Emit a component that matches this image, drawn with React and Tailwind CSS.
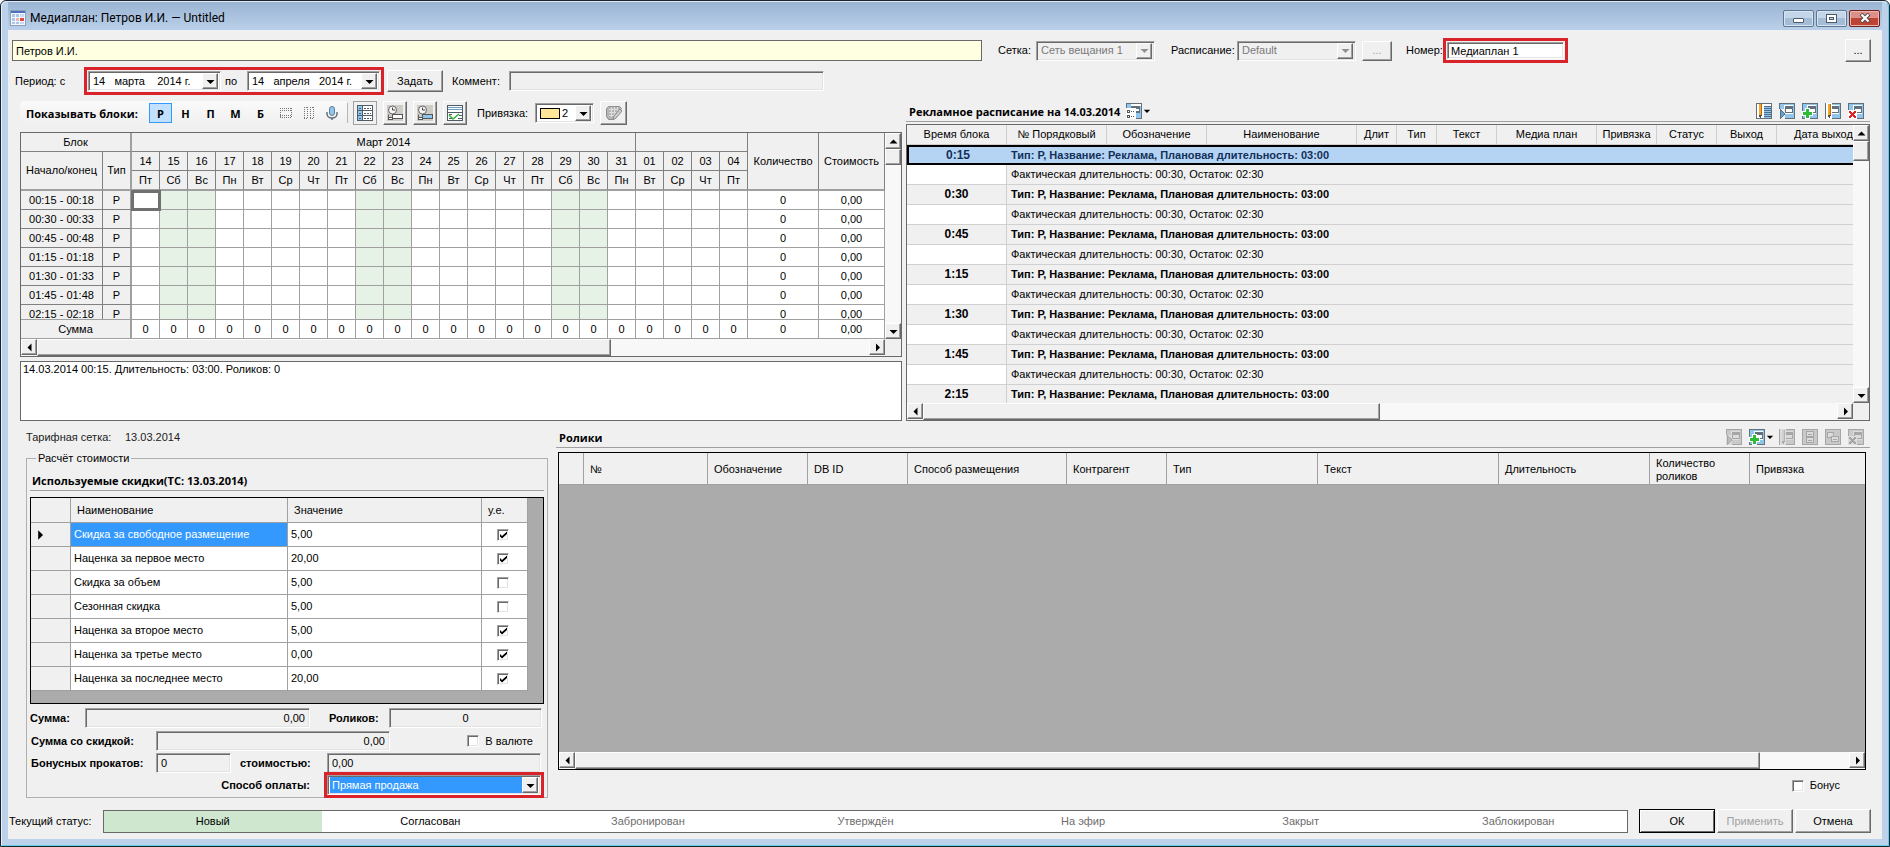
import { useState } from 'react';

const RAISED =
  'border border-t-white border-l-white border-r-[#696969] border-b-[#696969] bg-[#f0f0f0] shadow-[inset_-1px_-1px_0_#a0a0a0]';
const SUNKEN =
  'border border-t-[#a0a0a0] border-l-[#a0a0a0] border-r-white border-b-white shadow-[inset_1px_1px_0_#696969,inset_-1px_-1px_0_#e3e3e3]';

const DAYS = [
  ['14', 'Пт'], ['15', 'Сб'], ['16', 'Вс'], ['17', 'Пн'], ['18', 'Вт'], ['19', 'Ср'], ['20', 'Чт'], ['21', 'Пт'],
  ['22', 'Сб'], ['23', 'Вс'], ['24', 'Пн'], ['25', 'Вт'], ['26', 'Ср'], ['27', 'Чт'], ['28', 'Пт'], ['29', 'Сб'],
  ['30', 'Вс'], ['31', 'Пн'], ['01', 'Вт'], ['02', 'Ср'], ['03', 'Чт'], ['04', 'Пт'],
];

const BLOCKS = [
  '00:15 - 00:18', '00:30 - 00:33', '00:45 - 00:48', '01:15 - 01:18', '01:30 - 01:33', '01:45 - 01:48', '02:15 - 02:18',
];

const AD_COLUMNS = [
  ['Время блока', 'w-[100px]'], ['№ Порядковый', 'w-[100px]'], ['Обозначение', 'w-[100px]'],
  ['Наименование', 'w-[150px]'], ['Длит', 'w-10'], ['Тип', 'w-10'], ['Текст', 'w-15'], ['Медиа план', 'w-[100px]'],
  ['Привязка', 'w-15'], ['Статус', 'w-15'], ['Выход', 'w-15'], ['Дата выхода', 'w-[100px]'],
];

const AD_TIMES = ['0:15', '0:30', '0:45', '1:15', '1:30', '1:45', '2:15'];

const DISCOUNTS = [
  ['Скидка за свободное размещение', '5,00', true],
  ['Наценка за первое место', '20,00', true],
  ['Скидка за объем', '5,00', false],
  ['Сезонная скидка', '5,00', false],
  ['Наценка за второе место', '5,00', true],
  ['Наценка за третье место', '0,00', true],
  ['Наценка за последнее место', '20,00', true],
];

const ROLL_COLUMNS = [
  ['№', 'w-[124px]'], ['Обозначение', 'w-[100px]'], ['DB ID', 'w-[100px]'], ['Способ размещения', 'w-[159px]'],
  ['Контрагент', 'w-[100px]'], ['Тип', 'w-[151px]'], ['Текст', 'w-[181px]'], ['Длительность', 'w-[151px]'],
  ['Количество роликов', 'w-[100px]'], ['Привязка', ''],
];

const STATUSES = ['Новый', 'Согласован', 'Забронирован', 'Утверждён', 'На эфир', 'Закрыт', 'Заблокирован'];

/* ---------- Иконки ---------- */

const Svg = ({ children, className = 'size-4' }) => (
  <svg viewBox="0 0 16 16" className={className} shapeRendering="crispEdges" aria-hidden="true">
    {children}
  </svg>
);

const AppIcon = () => (
  <Svg>
    <rect width="16" height="16" fill="#8aa0b8" />
    <rect x="1" y="1" width="14" height="2" fill="#4f6fc0" />
    <rect x="1" y="3" width="14" height="12" fill="#f4f8fd" />
    <path d="M2 4h3v3H2zM6 4h3v3H6zM2 8h3v3H2zM2 12h3v2H2zM6 12h3v2H6z" fill="#a9c6ee" />
    <path d="M6 8h3v3H6z" fill="#e9b6b6" />
    <path d="M10 8h4v3h-4z" fill="#e0493f" />
    <path d="M10 4h4v3h-4zM10 12h4v2h-4z" fill="#c9dbf3" />
  </Svg>
);

// Карточка с мини-окном, основа всех кнопок «добавить / изменить / удалить»
const CardIcon = ({ kind, off, className }) => {
  const line = off ? '#a6a6a6' : '#62707c';
  const blue = off ? '#c9c9c9' : '#8fc6ee';
  const paper = off ? '#dcdcdc' : '#fff';
  if (kind === 'pair' || kind === 'copy') {
    return (
      <Svg className={className}>
        <rect x=".5" y=".5" width="15" height="15" fill={blue} stroke={line} />
        {kind === 'pair' ? (
          <g fill={paper} stroke={line}>
            <rect x="4.500" y="2.500" width="7" height="5" />
            <rect x="4.500" y="8.500" width="7" height="5" />
            <path d="M6 5.500h4M6 11.500h4" />
          </g>
        ) : (
          <g fill={paper} stroke={line}>
            <rect x="2.500" y="3.500" width="6" height="5" />
            <rect x="6.500" y="7.500" width="7" height="5" />
            <path d="M8 10.500h4" />
          </g>
        )}
      </Svg>
    );
  }
  return (
    <Svg className={className}>
      <rect x=".5" y=".5" width="15" height="15" fill={blue} stroke={line} />
      <rect x="5" y="2" width="9" height="9" fill={paper} />
      <rect x="6" y="3" width="8" height="7" fill={line} />
      <rect x="7" y="6" width="6" height="3" fill={paper} />
      {kind === 'insert' && (
        <>
          <rect x="0" y="6" width="6" height="10" fill={off ? '#dcdcdc' : '#f0f0f0'} />
          <path d="M1 6l5 5-5 5z" fill={off ? '#bdbdbd' : '#5aa3d8'} stroke={line} />
        </>
      )}
      {kind === 'add' && (
        <>
          <path d="M3 5h5v3h3v5H8v3H3v-3H0V8h3z" fill="#fff" />
          <path d="M4 6h3v3h3v3H7v3H4v-3H1V9h3z" fill="#2fbb35" />
        </>
      )}
      {kind === 'edit' && (
        <>
          <rect x="1" y="0" width="6" height="16" fill={paper} />
          <rect x="3" y="1" width="3" height="11" fill={off ? '#cfcfcf' : '#f3a62a'} />
          <rect x="5" y="1" width="1" height="11" fill={off ? '#b4b4b4' : '#b86d12'} />
          <path d="M3 12h3l-1 3H4z" fill={off ? '#a6a6a6' : '#4b4b4b'} />
        </>
      )}
      {kind === 'delete' && (
        <>
          <rect x="0" y="7" width="9" height="9" fill={paper} />
          <path
            d="M1 8h2v1h1v1h1V9h1V8h2v2H7v1H6v1h1v1h1v2H6v-1H5v-1H4v1H3v1H1v-2h1v-1h1v-1H2v-1H1z"
            fill={off ? '#a6a6a6' : '#dd2222'}
          />
        </>
      )}
    </Svg>
  );
};

const EditListIcon = () => (
  <Svg>
    <rect x=".5" y=".5" width="15" height="15" fill="#fff" stroke="#62707c" />
    <path d="M8 4h7v11H8z" fill="#8fc6ee" />
    <path d="M8 3.500h7M8 5.500h7M8 7.500h7M8 9.500h7M8 11.500h7M8 13.500h7" stroke="#4d6b84" />
    <rect x="3" y="1" width="3" height="11" fill="#f3a62a" />
    <rect x="5" y="1" width="1" height="11" fill="#b86d12" />
    <path d="M3 12h3l-1 3H4z" fill="#4b4b4b" />
  </Svg>
);

const ViewIcon = () => (
  <Svg>
    <rect width="16" height="16" fill="#62707c" />
    <rect x="1" y="1" width="14" height="14" fill="#8fc6ee" />
    <path d="M5 1h10v2H5z" fill="#fff" />
    <path d="M0 5h10v11H0z" fill="#fff" />
    <path d="M5 3h9v7h-4V5H5z" fill="#62707c" />
    <path d="M10 6h3v2h-3z" fill="#fff" />
    <path d="M1.500 7.500h2v2h-2zM1.500 12.500h2v2h-2z" fill="#fff" stroke="#555" />
    <path d="M5 8h1v1H5zM7 8h1v1H7zM5 13h1v1H5zM7 13h1v1H7z" fill="#555" />
  </Svg>
);

const RowsIcon = () => (
  <Svg>
    <path d="M2 3.500h12M2 5.500h12M2 10.500h12M2 12.500h12M2.500 3v10M13.500 3v10" stroke="#777" strokeDasharray="1 1" fill="none" />
  </Svg>
);

const ColumnsIcon = () => (
  <Svg>
    <path d="M3.500 2v12M6.500 2v12M9.500 2v12M12.500 2v12M3 2.500h4M3 13.500h4M9 2.500h4M9 13.500h4" stroke="#777" strokeDasharray="1 1" fill="none" />
  </Svg>
);

const MicIcon = () => (
  <svg viewBox="0 0 16 16" className="size-4" aria-hidden="true">
    <rect x="5.500" y="1.500" width="5" height="9" rx="2.500" fill="#8fc6ee" stroke="#5f7f9c" />
    <path d="M3 7v2a5 4 0 0 0 10 0V7M8 13v2" fill="none" stroke="#62707c" strokeWidth="1.500" />
  </svg>
);

const ListIcon = () => (
  <Svg>
    <rect x=".5" y=".5" width="15" height="15" fill="#fff" stroke="#4f5b66" />
    <rect x="1" y="1" width="4" height="14" fill="#8fc6ee" />
    <path d="M1 5.500h14M1 10.500h14M5.500 1v14" stroke="#4f5b66" />
    <path d="M2 3.500h2M2 8.500h2M2 13.500h2M7 3.500h7M7 8.500h7M7 13.500h7" stroke="#4f5b66" strokeDasharray="2 1" />
  </Svg>
);

const ClockIcon = ({ fill }) => (
  <svg viewBox="0 0 16 16" className="size-4" aria-hidden="true">
    <rect width="16" height="16" fill="#cfccc6" />
    <circle cx="5.500" cy="5" r="4" fill="#f4f4f4" stroke="#666" />
    <path d="M5.500 2.500V5h2.500" fill="none" stroke="#444" />
    <path d="M1.500 9.500v4" fill="none" stroke="#666" />
    <rect x="5.500" y="9.500" width="10" height="4" fill={fill} stroke="#555" />
    <rect x="1.500" y="12.500" width="4" height="2" fill="#fff" stroke="#555" />
  </svg>
);

const CheckListIcon = () => (
  <svg viewBox="0 0 16 16" className="size-4" aria-hidden="true">
    <rect x=".5" y=".5" width="15" height="15" fill="#fff" stroke="#4f5b66" />
    <path d="M1 2.500h14M1 4.500h14" stroke="#6f9cc4" />
    <path d="M1 7.500h14M2 9.500h3M2 13.500h3M12 10.500h3M11 13.500h4" stroke="#4f5b66" />
    <path d="M2 10l4 4 6-5" fill="none" stroke="#35b53a" strokeWidth="1.600" />
  </svg>
);

const PencilGridIcon = () => (
  <svg viewBox="0 0 16 16" className="size-4" aria-hidden="true">
    <path d="M2.500 1.500h11l2 2-8 11h-5l-2-3v-8z" fill="#b4b4b4" stroke="#8f8f8f" />
    <path d="M3 4.500h9M3 7.500h7M3 10.500h5M5.500 2v10M8.500 2v8M11.500 2v4" stroke="#dedede" />
    <path d="M14 4l-6 7-1 4 3-2 6-7z" fill="#cfcfcf" stroke="#8a8a8a" />
  </svg>
);

const ARROWS = {
  up: 'M3.500 9.500h8l-4-4z',
  down: 'M3.500 6h8l-4 4z',
  left: 'M9.500 3.500v8l-4-4z',
  right: 'M6 3.500v8l4-4z',
};

const Arrow = ({ dir, color = '#000', className = 'size-[15px] shrink-0' }) => (
  <svg viewBox="0 0 15 15" className={className} aria-hidden="true">
    <path d={ARROWS[dir]} fill={color} />
  </svg>
);

/* ---------- Элементы управления ---------- */

const ScrollButton = ({ dir, label }) => (
  <button aria-label={label} className={`flex size-4 shrink-0 items-center justify-center ${RAISED}`}>
    <Arrow dir={dir} />
  </button>
);

const HScroll = ({ thumb }) => (
  <div className="flex h-[17px] w-full bg-[#f8f8f8]">
    <ScrollButton dir="left" label="Влево" />
    <div className="flex flex-1">
      <div className={`h-full ${thumb} ${RAISED}`} />
    </div>
    <ScrollButton dir="right" label="Вправо" />
  </div>
);

const VScroll = ({ thumb }) => (
  <div className="flex w-4 shrink-0 flex-col bg-[#f8f8f8]">
    <ScrollButton dir="up" label="Вверх" />
    <div className="flex-1">
      <div className={`w-full ${thumb} ${RAISED}`} />
    </div>
    <ScrollButton dir="down" label="Вниз" />
  </div>
);

const Button = ({ children, className = '', ...props }) => (
  <button className={`flex shrink-0 items-center justify-center disabled:text-[#a0a0a0] ${RAISED} ${className}`} {...props}>
    {children}
  </button>
);

const TextBox = ({ className = '', ...props }) => (
  <input type="text" className={`h-5 min-w-0 px-1 outline-none ${SUNKEN} ${className}`} {...props} />
);

const Combo = ({ id, value, disabled, className = '', selectClass = '', swatch }) => (
  <div className={`flex h-5 items-center p-0.5 ${SUNKEN} ${disabled ? 'text-[#7a7a7a]' : 'bg-white'} ${className}`}>
    {swatch && <span className="ml-0.5 h-[11px] w-5 shrink-0 border border-black bg-[#ffe699]" />}
    <select id={id} disabled={disabled} className={`h-4 min-w-0 flex-1 appearance-none pl-0.5 outline-none ${selectClass}`}>
      <option>{value}</option>
    </select>
    <span className={`flex size-4 shrink-0 items-center justify-center ${RAISED}`}>
      <Arrow dir="down" color={disabled ? '#909090' : '#000'} />
    </span>
  </div>
);

const DateBox = ({ label, value }) => (
  <div className={`flex h-5 w-[133px] items-center bg-white p-0.5 ${SUNKEN}`}>
    <input type="text" aria-label={label} defaultValue={value} className="h-4 min-w-0 flex-1 pl-0.5 whitespace-pre outline-none" />
    <button aria-label="Открыть календарь" className={`flex size-4 shrink-0 items-center justify-center ${RAISED}`}>
      <Arrow dir="down" />
    </button>
  </div>
);

const Checkbox = ({ className = '', ...props }) => (
  <span className={`inline-grid ${className}`}>
    <input type="checkbox" className={`peer col-start-1 row-start-1 size-3 appearance-none bg-white ${SUNKEN}`} {...props} />
    <svg viewBox="0 0 12 12" className="pointer-events-none col-start-1 row-start-1 hidden size-3 peer-checked:block" aria-hidden="true">
      <path d="M3 5v2.500L5 9.500l5-4.500V2.500L5 7z" fill="#000" />
    </svg>
  </span>
);

/* ---------- Части окна ---------- */

const TitleBar = () => (
  <header className="flex h-7 items-center bg-linear-to-b from-[#9ab4d2] to-[#bad0ea] px-0.5 pt-1">
    <AppIcon />
    <h1 className="ml-1 font-[Roboto,'Noto_Sans',sans-serif] text-[12px]">Медиаплан: Петров И.И. — Untitled</h1>
    <div className="ml-auto flex gap-0.5">
      <button aria-label="Свернуть" className="flex h-[17px] w-[31px] items-center justify-center rounded-[2px] border border-[#5d7692] bg-linear-to-b from-[#c3d5e8] from-50% to-[#a4bcd6] to-50% shadow-[inset_0_0_0_1px_#d9e6f2]">
        <span className="mt-1 h-[5px] w-[11px] rounded-[1px] border border-[#4c5b6c] bg-white" />
      </button>
      <button aria-label="Развернуть" className="flex h-[17px] w-[31px] items-center justify-center rounded-[2px] border border-[#5d7692] bg-linear-to-b from-[#c3d5e8] from-50% to-[#a4bcd6] to-50% shadow-[inset_0_0_0_1px_#d9e6f2]">
        <svg viewBox="0 0 11 9" className="h-[9px] w-[11px]" shapeRendering="crispEdges" aria-hidden="true">
          <rect width="11" height="9" fill="#4c5b6c" />
          <rect x="1" y="1" width="9" height="7" fill="#fff" />
          <rect x="3" y="3" width="5" height="3" fill="#4c5b6c" />
          <rect x="4" y="4" width="3" height="1" fill="#c3d5e8" />
        </svg>
      </button>
      <button aria-label="Закрыть" className="flex h-[17px] w-[31px] items-center justify-center rounded-[2px] border border-[#6e211d] bg-linear-to-b from-[#dc9087] from-50% to-[#bd4334] to-50% shadow-[inset_0_0_0_1px_#e9b5ae]">
        <svg viewBox="0 0 12 10" className="h-2.5 w-3" aria-hidden="true">
          <path d="M2 1l8 8M10 1L2 9" stroke="#53494d" strokeWidth="4" />
          <path d="M2.500 1.500l7 7M9.500 1.500l-7 7" stroke="#fff" strokeWidth="2.200" />
        </svg>
      </button>
    </div>
  </header>
);

const TopFields = () => (
  <>
    <div className="flex h-[25px] items-center pr-[11px] pl-1">
      <input aria-label="Клиент" type="text" defaultValue="Петров И.И." className="h-[21px] min-w-0 flex-1 border border-[#696969] bg-[#ffffe1] px-[3px] outline-none" />
      <label htmlFor="net" className="ml-4 w-[38px]">Сетка:</label>
      <Combo id="net" value="Сеть вещания 1" disabled className="w-[119px]" />
      <label htmlFor="sched" className="ml-4 w-[66px]">Расписание:</label>
      <Combo id="sched" value="Default" disabled className="w-[119px]" />
      <Button disabled aria-label="Выбрать расписание" className="ml-1.5 h-5 w-[30px]">...</Button>
      <label htmlFor="num" className="ml-3.5 w-[37px]">Номер:</label>
      <div className="w-[125px] border-[3px] border-[#d8232a] p-px">
        <TextBox id="num" defaultValue="Медиаплан 1" className="h-[17px] w-full bg-white px-[3px]" />
      </div>
      <Button aria-label="Свойства" className="ml-[277px] h-[23px] w-[26px]">...</Button>
    </div>
    <div className="mt-[5px] flex h-[26px] items-center pl-[7px]">
      <span className="w-[69px]">Период: с</span>
      <div className="flex items-center border-[3px] border-[#d8232a] p-px">
        <DateBox label="Дата начала" value="14   марта    2014 г." />
        <span className="w-[26px] pl-1">по</span>
        <DateBox label="Дата окончания" value="14   апреля   2014 г." />
      </div>
      <Button className="ml-[3px] h-[22px] w-[56px]">Задать</Button>
      <label htmlFor="comment" className="ml-[9px] w-[57px]">Коммент:</label>
      <TextBox id="comment" className="w-[315px]" />
    </div>
  </>
);

const HEADING = "font-['Open_Sans','Noto_Sans',sans-serif] text-[11px] font-bold";

const Toolbar = () => {
  const [active, setActive] = useState('Р');
  return (
    <div className="flex h-6 items-center">
      <div className="flex h-6 items-center rounded bg-linear-to-b from-[#fafafa] to-[#f0f0f0] pl-1.5">
        <span className={`w-[123px] whitespace-nowrap ${HEADING}`}>Показывать блоки:</span>
        {['Р', 'Н', 'П', 'М', 'Б'].map((name) => (
          <button
            key={name}
            onClick={() => setActive(name)}
            className={`mr-0.5 h-5 w-[23px] border ${HEADING} ${
              active === name ? 'border-[#3399ff] bg-[#c2e0ff]' : 'border-transparent'
            }`}
          >
            {name}
          </button>
        ))}
        <button aria-label="Строки" className="flex w-[23px] justify-center"><RowsIcon /></button>
        <button aria-label="Столбцы" className="flex w-[23px] justify-center"><ColumnsIcon /></button>
        <button aria-label="Микрофон" className="flex w-[23px] justify-center"><MicIcon /></button>
        <span className="ml-1 h-5 w-px bg-[#b5b5b5]" />
      </div>
      <div className="ml-[5px] flex gap-1.5">
        <Button aria-label="Список" className="size-6 border-[#a0a0a0]! shadow-none!"><ListIcon /></Button>
        <Button aria-label="Время блока" className="size-6"><ClockIcon fill="#fff" /></Button>
        <Button aria-label="Занятое время" className="size-6"><ClockIcon fill="#8fc6ee" /></Button>
        <Button aria-label="Проверить" className="size-6"><CheckListIcon /></Button>
      </div>
      <label htmlFor="bind" className="ml-2.5 w-[58px]">Привязка:</label>
      <Combo id="bind" value="2" swatch className="w-[59px]" />
      <Button disabled aria-label="Изменить сетку" className="ml-1.5 h-6 w-[27px]"><PencilGridIcon /></Button>
    </div>
  );
};

const HEAD_CELL = 'border-r border-b border-[#808080] bg-[#f0f0f0] p-0 font-normal';
const BODY_CELL = 'border-r border-b border-[#a0a0a0] p-0';

const DayCols = () => (
  <colgroup>
    <col className="w-[82px]" />
    <col className="w-[29px]" />
    {DAYS.map(([d]) => <col key={d} className="w-7" />)}
    <col className="w-[71px]" />
    <col />
  </colgroup>
);

const isWeekend = (i) => ['Сб', 'Вс'].includes(DAYS[i][1]);

const BlockGrid = () => (
  <div className="mt-[7px] border border-[#696969] bg-white">
    <div className="flex">
      <div className="min-w-0 flex-1">
        <div className="h-[186px] overflow-hidden">
          <table className="w-full table-fixed border-separate border-spacing-0 text-center">
            <DayCols />
            <thead>
              <tr className="h-[19px]">
                <th colSpan={2} className={`${HEAD_CELL} border-r-2! border-r-[#a0a0a0]!`}>Блок</th>
                <th colSpan={18} className={HEAD_CELL}>Март 2014</th>
                <th colSpan={4} className={HEAD_CELL}></th>
                <th rowSpan={3} className={`${HEAD_CELL} border-b-2! border-b-[#a0a0a0]!`}>Количество</th>
                <th rowSpan={3} className={`${HEAD_CELL} border-b-2! border-b-[#a0a0a0]!`}>Стоимость</th>
              </tr>
              <tr className="h-[19px]">
                <th rowSpan={2} className={`${HEAD_CELL} border-b-2! border-b-[#a0a0a0]!`}>Начало/конец</th>
                <th rowSpan={2} className={`${HEAD_CELL} border-r-2! border-b-2! border-r-[#a0a0a0]! border-b-[#a0a0a0]!`}>Тип</th>
                {DAYS.map(([d]) => <th key={d} className={HEAD_CELL}>{d}</th>)}
              </tr>
              <tr className="h-5">
                {DAYS.map(([d, w]) => <th key={d} className={`${HEAD_CELL} border-b-2! border-b-[#a0a0a0]!`}>{w}</th>)}
              </tr>
            </thead>
            <tbody>
              {BLOCKS.map((time, row) => (
                <tr key={time} className="h-[19px]">
                  <td className={HEAD_CELL}>{time}</td>
                  <td className={`${HEAD_CELL} border-r-2! border-r-[#a0a0a0]!`}>Р</td>
                  {DAYS.map(([d], i) => (
                    <td
                      key={d}
                      className={`${BODY_CELL} ${isWeekend(i) ? 'bg-[#e6f2e6]' : ''} ${
                        row === 0 && i === 0 ? 'outline-[3px] -outline-offset-2 outline-[#707070]' : ''
                      }`}
                    />
                  ))}
                  <td className={BODY_CELL}>0</td>
                  <td className={BODY_CELL}>0,00</td>
                </tr>
              ))}
            </tbody>
          </table>
        </div>
        <table className="w-full table-fixed border-separate border-spacing-0 border-t border-[#a0a0a0] text-center">
          <DayCols />
          <tbody>
            <tr className="h-[19px]">
              <td colSpan={2} className={`${BODY_CELL} border-r-2! bg-[#f0f0f0]`}>Сумма</td>
              {DAYS.map(([d]) => <td key={d} className={BODY_CELL}>0</td>)}
              <td className={BODY_CELL}>0</td>
              <td className={BODY_CELL}>0,00</td>
            </tr>
          </tbody>
        </table>
      </div>
      <VScroll thumb="h-4" />
    </div>
    <div className="flex bg-[#f0f0f0] pr-4">
      <HScroll thumb="w-[69%]" />
    </div>
  </div>
);

const AdSchedule = () => (
  <section className="flex min-w-0 flex-[964] flex-col">
    <div className="flex h-[21px] items-center border-b border-[#a0a0a0] pl-[3px]">
      <h2 className={HEADING}>Рекламное расписание на 14.03.2014</h2>
      <button aria-label="Вид" className="ml-1.5 flex items-center">
        <ViewIcon />
        <Arrow dir="down" className="-ml-px size-3" />
      </button>
      <div className="ml-auto flex gap-[7px] pr-1.5">
        <button aria-label="Редактировать список"><EditListIcon /></button>
        <button aria-label="Вставить"><CardIcon kind="insert" /></button>
        <button aria-label="Добавить"><CardIcon kind="add" /></button>
        <button aria-label="Изменить"><CardIcon kind="edit" /></button>
        <button aria-label="Удалить"><CardIcon kind="delete" /></button>
      </div>
    </div>
    <div className="mt-0.5 border border-[#696969] bg-[#f0f0f0]">
      <div className="flex h-[278px]">
        <div className="min-w-0 flex-1 overflow-hidden">
          <table className="w-[970px] table-fixed border-separate border-spacing-0">
            <colgroup>
              {AD_COLUMNS.map(([name, width]) => <col key={name} className={width} />)}
            </colgroup>
            <thead>
              <tr className="h-5">
                {AD_COLUMNS.map(([name]) => (
                  <th key={name} className="border-r border-b border-[#cfcfcf] p-0 font-normal whitespace-nowrap">{name}</th>
                ))}
              </tr>
            </thead>
            <tbody>
              {AD_TIMES.map((time, i) => {
                const line = i === 0 ? 'border-y-2 border-black bg-[#b5d4f4] text-[#12305a]' : 'border-b border-[#d0d0d0]';
                return [
                  <tr key={time} className="h-5 font-bold">
                    <td className={`p-0 text-center text-[12px] ${line} ${i === 0 ? 'border-l-2' : 'border-r'}`}>{time}</td>
                    <td colSpan={11} className={`p-0 pl-1 ${line}`}>Тип: Р, Название: Реклама, Плановая длительность: 03:00</td>
                  </tr>,
                  i < AD_TIMES.length - 1 && (
                    <tr key={`${time}-fact`} className="h-5">
                      <td className="border-r border-b border-[#d0d0d0] bg-white p-0" />
                      <td colSpan={11} className="border-b border-[#d0d0d0] p-0 pl-1">Фактическая длительность: 00:30, Остаток: 02:30</td>
                    </tr>
                  ),
                ];
              })}
            </tbody>
          </table>
        </div>
        <VScroll thumb="h-5" />
      </div>
      <div className="pr-4">
        <HScroll thumb="w-1/2" />
      </div>
    </div>
  </section>
);

const CostPanel = () => (
  <section className="flex w-[522px] shrink-0 flex-col">
    <div className="flex h-5 items-center text-[#222]">
      <span className="w-[99px]">Тарифная сетка:</span>
      <span>13.03.2014</span>
    </div>
    <fieldset className="mt-1 flex flex-col border border-[#b0b0b0] px-[3px]">
      <legend className="ml-1.5 px-0.5 leading-[14px]">Расчёт стоимости</legend>
      <h2 className={`mt-1.5 flex h-5 items-center border-b border-[#a0a0a0] pl-0.5 ${HEADING}`}>
        Используемые скидки(ТС: 13.03.2014)
      </h2>
      <div className="mt-1.5 h-[207px] border border-black bg-[#ababab]">
        <table className="w-[497px] table-fixed border-separate border-spacing-0 text-left">
          <colgroup>
            <col className="w-10" />
            <col className="w-[217px]" />
            <col className="w-[194px]" />
            <col />
          </colgroup>
          <thead>
            <tr className="h-[25px] bg-[#f0f0f0]">
              <th className="border-r border-b border-[#a0a0a0] p-0" aria-label="Строка" />
              <th className="border-r border-b border-[#a0a0a0] p-0 pl-1.5 font-normal">Наименование</th>
              <th className="border-r border-b border-[#a0a0a0] p-0 pl-1.5 font-normal">Значение</th>
              <th className="border-r border-b border-[#a0a0a0] p-0 pl-1.5 font-normal">у.е.</th>
            </tr>
          </thead>
          <tbody>
            {DISCOUNTS.map(([name, value, checked], i) => (
              <tr key={name} className="h-6 bg-white">
                <td className="border-r border-b border-[#a0a0a0] bg-[#f0f0f0] p-0">
                  {i === 0 && <Arrow dir="right" className="size-[18px]" />}
                </td>
                <td className={`border-r border-b border-[#a0a0a0] p-0 pl-[3px] ${i === 0 ? 'bg-[#3399ff] text-white' : ''}`}>{name}</td>
                <td className="border-r border-b border-[#a0a0a0] p-0 pl-[3px]">{value}</td>
                <td className="border-r border-b border-[#a0a0a0] p-0">
                  <Checkbox className="ml-[15px] align-middle" defaultChecked={checked} aria-label={`${name}, у.е.`} />
                </td>
              </tr>
            ))}
          </tbody>
        </table>
      </div>
      <div className="mt-1 flex h-5 items-center">
        <label htmlFor="sum" className="w-[55px] font-bold">Сумма:</label>
        <TextBox id="sum" defaultValue="0,00" readOnly className="w-[225px] px-0.5 text-right" />
        <label htmlFor="rolls" className="ml-[19px] w-[60px] font-bold">Роликов:</label>
        <TextBox id="rolls" defaultValue="0" readOnly className="w-[153px] text-center" />
      </div>
      <div className="mt-[3px] flex h-5 items-center pl-px">
        <label htmlFor="sum2" className="w-[125px] font-bold">Сумма со скидкой:</label>
        <TextBox id="sum2" defaultValue="0,00" readOnly className="w-[234px] px-0.5 text-right" />
        <label className="ml-auto flex items-center gap-1.5 pr-[11px]">
          <Checkbox />
          В валюте
        </label>
      </div>
      <div className="mt-0.5 flex h-5 items-center pl-px">
        <label htmlFor="bonus-runs" className="w-[125px] font-bold">Бонусных прокатов:</label>
        <TextBox id="bonus-runs" defaultValue="0" readOnly className="w-[75px] px-0.5" />
        <label htmlFor="bonus-cost" className="ml-[9px] w-[87px] font-bold">стоимостью:</label>
        <TextBox id="bonus-cost" defaultValue="0,00" readOnly className="w-[214px] px-0.5" />
      </div>
      <div className="-mt-px -mb-px flex items-center justify-end">
        <label htmlFor="pay" className="mr-3.5 font-bold">Способ оплаты:</label>
        <div className="w-[220px] border-[3px] border-[#d8232a]">
          <Combo id="pay" value="Прямая продажа" selectClass="bg-[#3399ff] text-white" />
        </div>
      </div>
    </fieldset>
  </section>
);

const Rolls = () => (
  <section className="flex min-w-0 flex-1 flex-col">
    <div className="flex h-[21px] items-center border-b border-[#a0a0a0] pl-[3px]">
      <h2 className={HEADING}>Ролики</h2>
      <div className="ml-auto flex items-center gap-[7px] pr-1.5">
        <button disabled aria-label="Вставить"><CardIcon kind="insert" off /></button>
        <button aria-label="Добавить ролик" className="flex items-center">
          <CardIcon kind="add" />
          <Arrow dir="down" className="-mr-1 -ml-px size-3" />
        </button>
        <button disabled aria-label="Изменить"><CardIcon kind="edit" off /></button>
        <button disabled aria-label="Карточка"><CardIcon kind="pair" off /></button>
        <button disabled aria-label="Копировать"><CardIcon kind="copy" off /></button>
        <button disabled aria-label="Удалить"><CardIcon kind="delete" off /></button>
      </div>
    </div>
    <div className="mt-1 mr-1 ml-0.5 flex flex-1 flex-col border border-black bg-[#ababab]">
      <table className="w-full table-fixed border-separate border-spacing-0 bg-[#f0f0f0] text-left">
        <thead>
          <tr className="h-8">
            <th className="w-[25px] border-r border-b border-[#a0a0a0] p-0" aria-label="Строка" />
            {ROLL_COLUMNS.map(([name, width], i) => (
              <th key={name} className={`${width} border-b border-[#a0a0a0] p-0 pt-0.5 pl-1.5 leading-[13px] font-normal ${i < 9 ? 'border-r' : ''}`}>
                {name}
              </th>
            ))}
          </tr>
        </thead>
      </table>
      <div className="mt-auto">
        <HScroll thumb="w-[93%]" />
      </div>
    </div>
    <label className="mr-[30px] flex h-[31px] items-center gap-1.5 self-end">
      <Checkbox />
      Бонус
    </label>
  </section>
);

const StatusBar = () => (
  <footer className="flex items-center pt-2 pr-[11px] pb-1.5">
    <span className="w-[95px] shrink-0 pl-px">Текущий статус:</span>
    <ol className="grid h-[23px] flex-1 grid-cols-7 border border-[#696969] bg-white">
      {STATUSES.map((name, i) => (
        <li
          key={name}
          className={`flex items-center justify-center ${i === 0 ? 'bg-[#cee7ce]' : ''} ${i > 1 ? 'text-[#6d6d6d]' : ''}`}
        >
          {name}
        </li>
      ))}
    </ol>
    <div className="ml-[11px] flex gap-0.5">
      <Button className="h-6 w-[76px] border-black! shadow-[inset_1px_1px_0_#fff,inset_-1px_-1px_0_#696969]!">ОК</Button>
      <Button disabled className="h-6 w-[76px]">Применить</Button>
      <Button className="h-6 w-[76px]">Отмена</Button>
    </div>
  </footer>
);

export default function App() {
  return (
    <div className="flex min-h-screen flex-col rounded-t-md border border-[#1b2430] bg-[#bcd2ea] font-['Liberation_Sans',Arial,sans-serif] text-[11px] leading-[13px] text-black">
      <div className="flex flex-1 flex-col rounded-t-md border border-t-[#dfeaf5] border-r-[#5fcdec] border-b-[#5fcdec] border-l-[#e8f0f8] px-1.5 pb-1.5">
        <TitleBar />
        <main className="flex flex-1 flex-col bg-[#f0f0f0] pt-2">
          <TopFields />
          <div className="mt-[7px] flex gap-1 px-3">
            <section className="flex min-w-0 flex-[882] flex-col">
              <Toolbar />
              <BlockGrid />
              <output className="mt-1 flex-1 border border-[#696969] bg-white px-0.5 pt-px">
                14.03.2014 00:15. Длительность: 03:00. Роликов: 0
              </output>
            </section>
            <AdSchedule />
          </div>
          <div className="mt-1.5 flex flex-1 gap-2 pr-3 pl-[18px]">
            <CostPanel />
            <Rolls />
          </div>
          <StatusBar />
        </main>
      </div>
    </div>
  );
}
